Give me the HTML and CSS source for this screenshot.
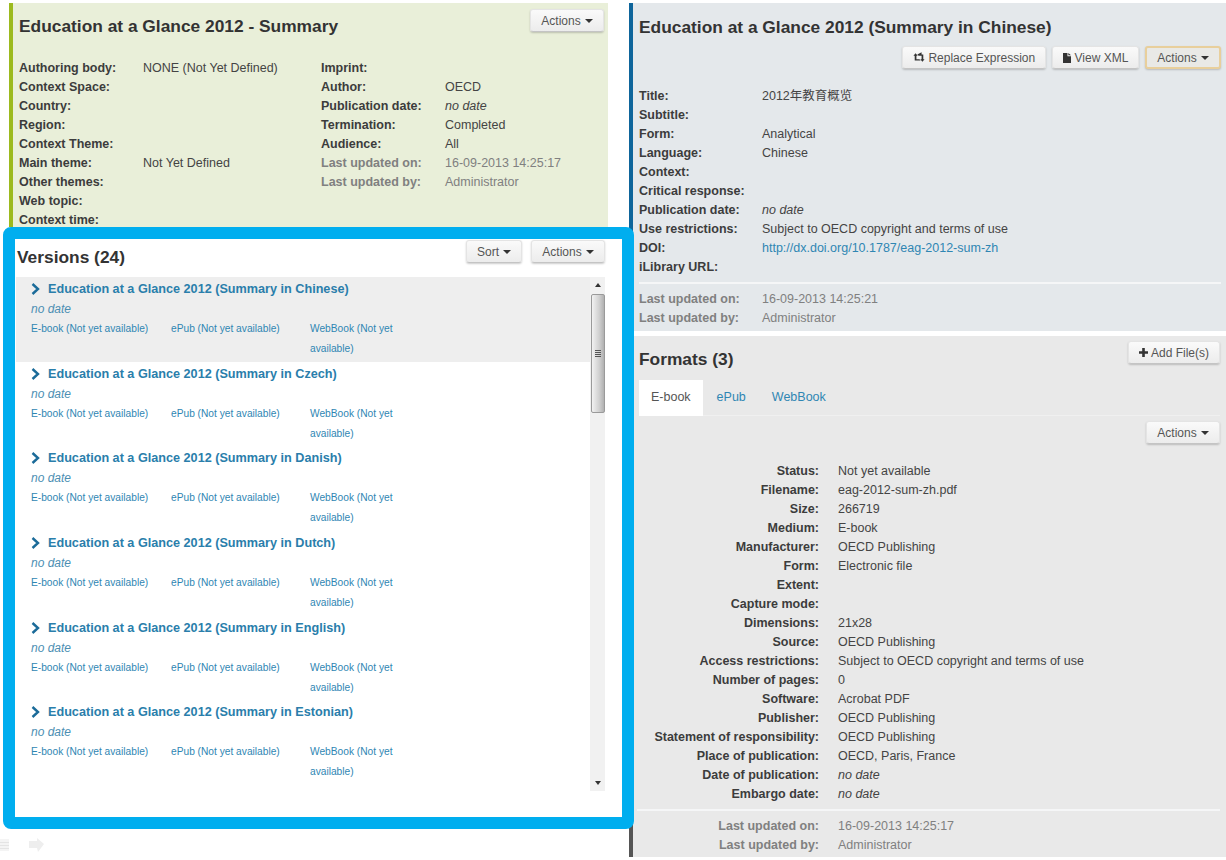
FILE: index.html
```html
<!DOCTYPE html>
<html lang="en">
<head>
    <meta charset="UTF-8">
    <meta name="viewport" content="width=device-width, initial-scale=1.0">
    <title>Education at a Glance 2012</title>
    <link rel="stylesheet" href="styles.css">
</head>
<body>
<div class="page">

    <div class="left-col">
        <section class="summary">
            <div class="summary-head">
                <h2>Education at a Glance 2012 - Summary</h2>
                <button class="btn">Actions <span class="caret"></span></button>
            </div>
            <div class="summary-cols">
                <dl class="meta">
                    <dt>Authoring body:</dt><dd>NONE (Not Yet Defined)</dd>
                    <dt>Context Space:</dt><dd></dd>
                    <dt>Country:</dt><dd></dd>
                    <dt>Region:</dt><dd></dd>
                    <dt>Context Theme:</dt><dd></dd>
                    <dt>Main theme:</dt><dd>Not Yet Defined</dd>
                    <dt>Other themes:</dt><dd></dd>
                    <dt>Web topic:</dt><dd></dd>
                    <dt>Context time:</dt><dd></dd>
                </dl>
                <dl class="meta">
                    <dt>Imprint:</dt><dd></dd>
                    <dt>Author:</dt><dd>OECD</dd>
                    <dt>Publication date:</dt><dd><em>no date</em></dd>
                    <dt>Termination:</dt><dd>Completed</dd>
                    <dt>Audience:</dt><dd>All</dd>
                    <dt class="muted">Last updated on:</dt><dd class="muted">16-09-2013 14:25:17</dd>
                    <dt class="muted">Last updated by:</dt><dd class="muted">Administrator</dd>
                </dl>
            </div>
        </section>

        <section class="versions">
            <div class="versions-head">
                <h2>Versions (24)</h2>
                <div class="btn-row">
                    <button class="btn">Sort <span class="caret"></span></button>
                    <button class="btn">Actions <span class="caret"></span></button>
                </div>
            </div>
            <div class="version-box">
                <ul class="version-list">
                    <li class="version current">
                        <a class="version-title" href="#"><svg class="chevron" viewBox="0 0 9 12"><path d="M1.5 1 7 6l-5.500 5" /></svg>Education at a Glance 2012 (Summary in Chinese)</a>
                        <div class="version-date">no date</div>
                        <div class="version-links"><a href="#">E-book (Not yet available)</a><a href="#">ePub (Not yet available)</a><a href="#">WebBook (Not yet available)</a></div>
                    </li>
                    <li class="version">
                        <a class="version-title" href="#"><svg class="chevron" viewBox="0 0 9 12"><path d="M1.500 1 7 6l-5.500 5" /></svg>Education at a Glance 2012 (Summary in Czech)</a>
                        <div class="version-date">no date</div>
                        <div class="version-links"><a href="#">E-book (Not yet available)</a><a href="#">ePub (Not yet available)</a><a href="#">WebBook (Not yet available)</a></div>
                    </li>
                    <li class="version">
                        <a class="version-title" href="#"><svg class="chevron" viewBox="0 0 9 12"><path d="M1.500 1 7 6l-5.500 5" /></svg>Education at a Glance 2012 (Summary in Danish)</a>
                        <div class="version-date">no date</div>
                        <div class="version-links"><a href="#">E-book (Not yet available)</a><a href="#">ePub (Not yet available)</a><a href="#">WebBook (Not yet available)</a></div>
                    </li>
                    <li class="version">
                        <a class="version-title" href="#"><svg class="chevron" viewBox="0 0 9 12"><path d="M1.500 1 7 6l-5.500 5" /></svg>Education at a Glance 2012 (Summary in Dutch)</a>
                        <div class="version-date">no date</div>
                        <div class="version-links"><a href="#">E-book (Not yet available)</a><a href="#">ePub (Not yet available)</a><a href="#">WebBook (Not yet available)</a></div>
                    </li>
                    <li class="version">
                        <a class="version-title" href="#"><svg class="chevron" viewBox="0 0 9 12"><path d="M1.500 1 7 6l-5.500 5" /></svg>Education at a Glance 2012 (Summary in English)</a>
                        <div class="version-date">no date</div>
                        <div class="version-links"><a href="#">E-book (Not yet available)</a><a href="#">ePub (Not yet available)</a><a href="#">WebBook (Not yet available)</a></div>
                    </li>
                    <li class="version">
                        <a class="version-title" href="#"><svg class="chevron" viewBox="0 0 9 12"><path d="M1.500 1 7 6l-5.500 5" /></svg>Education at a Glance 2012 (Summary in Estonian)</a>
                        <div class="version-date">no date</div>
                        <div class="version-links"><a href="#">E-book (Not yet available)</a><a href="#">ePub (Not yet available)</a><a href="#">WebBook (Not yet available)</a></div>
                    </li>
                </ul>
                <div class="scrollbar">
                    <span class="arrow-up"></span>
                    <div class="thumb"><span class="grip"></span></div>
                    <span class="arrow-down"></span>
                </div>
            </div>
        </section>

        <div class="page-tools">
            <svg class="tool-list" viewBox="0 0 15 14"><path d="M1 1h13v12H1z" fill="#f4f4f4" /><path d="M1 4.500h13M1 7.500h13M1 10.500h13" stroke="#e4e4e4" /></svg>
            <svg class="tool-next" viewBox="0 0 17 16"><path d="M1 3h8V0l7 6-6 8-1-4H1z" fill="#eeeeee" /></svg>
        </div>
    </div>

    <div class="right-col">
        <section class="expression">
            <h2>Education at a Glance 2012 (Summary in Chinese)</h2>
            <div class="btn-row toolbar">
                <button class="btn"><svg class="icon" viewBox="0 0 14 12"><path d="M3 1 .5 4H2v5.500h7L7.500 8H4V4h1.500zM5 2.500h5V0l0 0 0 0M11 11 13.500 8H12V2.500H5L6.500 4H10v4H8.500z" /></svg> Replace Expression</button>
                <button class="btn"><svg class="icon icon-file" viewBox="0 0 9 11"><path d="M0 0h5v3.500h4V11H0zM6 0l3 2.500H6z" /></svg> View XML</button>
                <button class="btn btn-focus">Actions <span class="caret"></span></button>
            </div>
            <dl class="meta wide">
                <dt>Title:</dt><dd>2012年教育概览</dd>
                <dt>Subtitle:</dt><dd></dd>
                <dt>Form:</dt><dd>Analytical</dd>
                <dt>Language:</dt><dd>Chinese</dd>
                <dt>Context:</dt><dd></dd>
                <dt>Critical response:</dt><dd></dd>
                <dt>Publication date:</dt><dd><em>no date</em></dd>
                <dt>Use restrictions:</dt><dd>Subject to OECD copyright and terms of use</dd>
                <dt>DOI:</dt><dd><a href="#">http://dx.doi.org/10.1787/eag-2012-sum-zh</a></dd>
                <dt>iLibrary URL:</dt><dd></dd>
            </dl>
            <hr class="rule">
            <dl class="meta wide">
                <dt class="muted">Last updated on:</dt><dd class="muted">16-09-2013 14:25:21</dd>
                <dt class="muted">Last updated by:</dt><dd class="muted">Administrator</dd>
            </dl>
        </section>

        <section class="formats">
            <div class="formats-head">
                <h2>Formats (3)</h2>
                <button class="btn"><svg class="icon icon-plus" viewBox="0 0 9 9"><path d="M3.200 0h2.600v3.200H9v2.600H5.800V9H3.200V5.800H0V3.200h3.200z" /></svg> Add File(s)</button>
            </div>
            <ul class="tabs">
                <li class="tab active">E-book</li>
                <li class="tab"><a href="#">ePub</a></li>
                <li class="tab"><a href="#">WebBook</a></li>
            </ul>
            <div class="tab-actions">
                <button class="btn">Actions <span class="caret"></span></button>
            </div>
            <dl class="meta file">
                <dt>Status:</dt><dd>Not yet available</dd>
                <dt>Filename:</dt><dd>eag-2012-sum-zh.pdf</dd>
                <dt>Size:</dt><dd>266719</dd>
                <dt>Medium:</dt><dd>E-book</dd>
                <dt>Manufacturer:</dt><dd>OECD Publishing</dd>
                <dt>Form:</dt><dd>Electronic file</dd>
                <dt>Extent:</dt><dd></dd>
                <dt>Capture mode:</dt><dd></dd>
                <dt>Dimensions:</dt><dd>21x28</dd>
                <dt>Source:</dt><dd>OECD Publishing</dd>
                <dt>Access restrictions:</dt><dd>Subject to OECD copyright and terms of use</dd>
                <dt>Number of pages:</dt><dd>0</dd>
                <dt>Software:</dt><dd>Acrobat PDF</dd>
                <dt>Publisher:</dt><dd>OECD Publishing</dd>
                <dt>Statement of responsibility:</dt><dd>OECD Publishing</dd>
                <dt>Place of publication:</dt><dd>OECD, Paris, France</dd>
                <dt>Date of publication:</dt><dd><em>no date</em></dd>
                <dt>Embargo date:</dt><dd><em>no date</em></dd>
            </dl>
            <hr class="rule">
            <dl class="meta file">
                <dt class="muted">Last updated on:</dt><dd class="muted">16-09-2013 14:25:17</dd>
                <dt class="muted">Last updated by:</dt><dd class="muted">Administrator</dd>
            </dl>
        </section>
    </div>

</div>
</body>
</html>
```

FILE: styles.css
```css
* {
    box-sizing: border-box;
}
body {
    margin: 0;
    background-color: white;
    color: #444;
    font-family: "Liberation Sans", "Noto Sans CJK SC", Arial, sans-serif;
    font-size: 12.5px;
}
h2 {
    margin: 0;
    font-size: 17.35px;
    line-height: 24px;
    color: #333;
}
a {
    color: #2f86b3;
    text-decoration: none;
}
ul {
    margin: 0;
    padding: 0;
    list-style: none;
}
.page {
    display: grid;
    grid-template-columns: 629px 1fr;
    height: 860px;
    overflow: hidden;
}

/* buttons */
.btn {
    display: inline-flex;
    align-items: center;
    justify-content: center;
    height: 23px;
    padding: 0 10px;
    background: linear-gradient(#fafafa, #ececec);
    border: 1px solid #e4e4e4;
    border-bottom-color: #c4c4c4;
    border-radius: 3px;
    box-shadow: 0 1px 2px rgba(0, 0, 0, 0.2);
    color: #555;
    font-family: inherit;
    font-size: 12px;
    white-space: pre;
}
.btn-focus {
    background: #e9e9e6;
    border: 2px solid #e8cf9c;
}
.btn-row {
    display: flex;
}
.caret {
    display: inline-block;
    margin-left: 1px;
    border-left: 4px solid transparent;
    border-right: 4px solid transparent;
    border-top: 4px solid #333;
}
.icon {
    width: 12px;
    height: 11px;
    fill: #333;
}
.icon-file {
    width: 8px;
    height: 10px;
}
.icon-plus {
    width: 9px;
    height: 9px;
}

/* label and value lists */
.meta {
    display: grid;
    grid-template-columns: 124px 1fr;
    grid-auto-rows: 19px;
    margin: 0;
    line-height: 19px;
}
.meta dt {
    font-weight: bold;
    color: #3c3c3c;
    white-space: nowrap;
}
.meta dd {
    margin: 0;
    white-space: nowrap;
}
.meta .muted {
    color: #808080;
}
.meta.wide {
    grid-template-columns: 123px 1fr;
}
.meta.file {
    grid-template-columns: 186px 1fr;
    column-gap: 19px;
}
.meta.file dt {
    text-align: right;
}
.rule {
    height: 2px;
    margin: 5px 0 6px;
    border: none;
    background-color: #f5f6f7;
}

/* left column */
.summary {
    height: 224px;
    margin: 3px 21px 0 9px;
    padding: 0 4px 0 6px;
    overflow: hidden;
    background-color: #e9efd9;
    border-left: 4px solid #9cba1e;
}
.summary-head {
    display: flex;
    justify-content: space-between;
    align-items: flex-start;
    height: 55.5px;
    padding-top: 6px;
}
.summary-head h2 {
    margin-top: 5px;
}
.summary-cols {
    display: grid;
    grid-template-columns: 302px 1fr;
}
.versions {
    position: relative;
    z-index: 1;
    height: 602px;
    margin: 0 -5px 0 3px;
    padding: 1px 17px 0 1px;
    background-color: white;
    border: 12px solid #00aeef;
    border-radius: 8px;
}
.versions-head {
    display: flex;
    justify-content: space-between;
    height: 37px;
}
.versions-head h2 {
    margin-top: 5px;
    padding-left: 1px;
}
.versions-head .btn-row {
    gap: 9px;
}
.version-box {
    display: flex;
    height: 514px;
}
.version-list {
    flex: 1;
    overflow: hidden;
}
.version {
    height: 84.67px;
    padding: 2px 0 0 15px;
    line-height: 20px;
}
.version.current {
    background-color: #eeeeee;
}
.version-title {
    display: flex;
    align-items: center;
    font-size: 12.65px;
    font-weight: bold;
    color: #2a7eab;
    white-space: nowrap;
}
.chevron {
    width: 9px;
    height: 12px;
    margin-right: 8px;
    fill: none;
    stroke: #1b6b99;
    stroke-width: 2.4;
}
.version-date {
    font-size: 12px;
    font-style: italic;
    color: #4d8fb3;
}
.version-links {
    display: grid;
    grid-template-columns: 140px 139px 92px;
    font-size: 10.2px;
}
.scrollbar {
    display: flex;
    flex-direction: column;
    align-items: center;
    width: 15px;
    background-color: #f1f1f1;
}
.arrow-up, .arrow-down {
    flex: none;
    height: 0;
    border-left: 3.5px solid transparent;
    border-right: 3.5px solid transparent;
}
.arrow-up {
    margin: 6px 0 7px;
    border-bottom: 4px solid #333;
}
.arrow-down {
    margin-top: auto;
    margin-bottom: 6px;
    border-top: 4px solid #333;
}
.thumb {
    display: flex;
    align-items: center;
    justify-content: center;
    flex: none;
    width: 14px;
    height: 119px;
    background: linear-gradient(90deg, #f2f2f2, #d0d0d0 60%, #b0b0b0);
    border: 1px solid #9a9a9a;
    border-radius: 2px;
}
.grip {
    width: 6px;
    height: 7px;
    background: repeating-linear-gradient(#555 0, #555 1px, transparent 1px, transparent 2px);
}
.page-tools {
    display: flex;
    align-items: flex-start;
    gap: 18px;
    margin: 9px 0 0 -5px;
}
.tool-list {
    width: 15px;
    height: 14px;
}
.tool-next {
    width: 17px;
    height: 16px;
}

/* right column */
.right-col {
    display: flex;
    flex-direction: column;
    padding-top: 3px;
}
.expression {
    height: 328px;
    margin-bottom: 5px;
    padding: 12px 5px 0 6px;
    background-color: #e4e8eb;
    border-left: 4px solid #0e659b;
}
.toolbar {
    justify-content: flex-end;
    gap: 6px;
    margin: 7px 0 17.5px;
}
.formats {
    height: 521px;
    padding: 5px 6px 0 0;
    background-color: #e9e9e9;
    border-left: 4px solid #555;
}
.formats-head {
    display: flex;
    justify-content: space-between;
    align-items: flex-start;
    padding-left: 6px;
}
.formats-head h2 {
    margin-top: 6px;
}
.tabs {
    display: flex;
    height: 36px;
    margin: 9px 0 0 6px;
    border-bottom: 1px solid #f0f0f0;
    line-height: 35px;
}
.tab {
    padding: 0 12px;
    margin-right: 2px;
}
.tab.active {
    height: 36px;
    background-color: white;
    color: #555;
}
.tab-actions {
    display: flex;
    justify-content: flex-end;
    margin: 5px 0 17.5px;
}
.formats .rule {
    margin-left: 4px;
}
```
